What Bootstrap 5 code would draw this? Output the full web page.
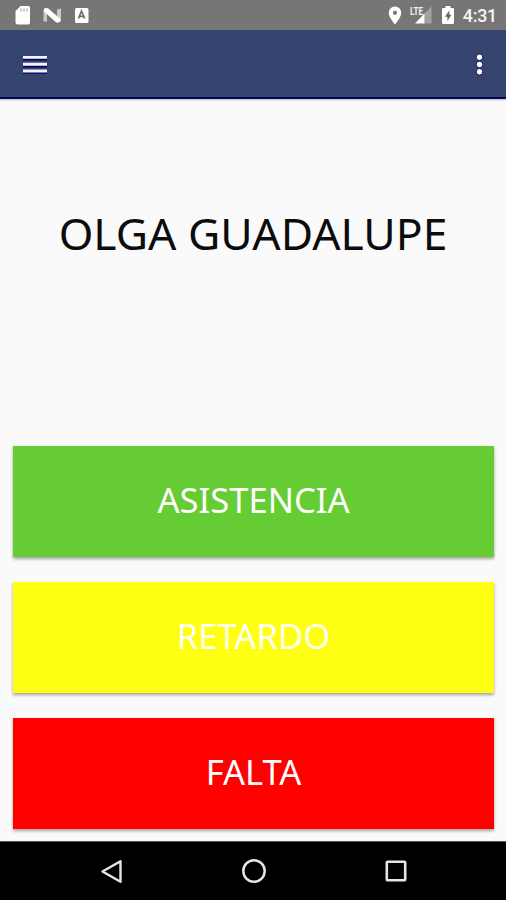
<!DOCTYPE html>
<html lang="es">
<head>
<meta charset="utf-8">
<meta name="viewport" content="width=device-width, initial-scale=1">
<title>Asistencia</title>
<link href="https://cdn.jsdelivr.net/npm/bootstrap@5.3.0/dist/css/bootstrap.min.css" rel="stylesheet">
<style>
html,body{height:100%}
body{background:#fafafa;font-family:"Noto Sans",sans-serif;overflow:hidden}
svg{display:block;flex:none}
.status-bar{height:30px;background:#767676;padding:0 9px 0 15px}
.clock{font:500 17.800px/30px Roboto,sans-serif;color:#f7f7f7;letter-spacing:-.2px;margin:2px 0 0 8px;height:30px}
.app-bar{height:69px;background:#35446f;border-bottom:2px solid #05055c;padding:0 22px 0 23px;box-shadow:0 1px 2px #b9b2cc}
.icon-btn{line-height:0}
.person{font-size:44.400px;line-height:60px;color:#0c0c0c;height:347px;padding-top:104px;font-weight:400}
.actions{gap:25px;padding:0 12px 0 13px}
.mark-btn{--bs-btn-border-width:0;--bs-btn-border-radius:0;--bs-btn-color:#fff;--bs-btn-hover-color:#fff;--bs-btn-font-size:34.600px;height:111px;line-height:47px;box-shadow:0 2px 3px rgba(0,0,0,.35);padding:0 0 5px}
.mark-present{background:#66cc33!important}
.mark-late{background:#ffff14!important}
.mark-absent{background:#ff0000!important}
.mark-late span{color:#fffff0}
.nav-keys{height:59px;background:#000;border-top:1px solid #555;padding:0 97px 0 99px}
</style>
<script src="https://cdn.jsdelivr.net/npm/bootstrap@5.3.0/dist/js/bootstrap.bundle.min.js" defer></script>
</head>
<body>
<div class="d-flex flex-column vh-100">
  <div class="status-bar d-flex align-items-center justify-content-between">
    <svg width="75" height="30" viewBox="15 0 75 30" aria-hidden="true">
      <path d="M20.500 6H28q2 0 2 2v14.500q0 2-2 2H17.500q-2 0-2-2V11z" fill="#fff"/>
      <path d="M21 8.500v3M24 8.500v3M27 8.500v3" stroke="#aaa" stroke-width="1.200"/>
      <path d="M43.500 9.500L47 12v10l-3.500-1zM61 8.500v12.500l-4-3V9.500z" fill="#c9c9c9"/>
      <path d="M44 8.500q2-1 4-.3L60.500 19v2.500q-2 1.800-4.500.8L44 11.500z" fill="#fff"/>
      <rect x="75" y="8" width="13.500" height="15" rx="1.500" fill="#fff"/>
      <path d="M78.500 18.500l3-7.500 3.200 7.500M79.700 16.300h4" fill="none" stroke="#6d6d6d" stroke-width="1.700"/>
    </svg>
    <div class="d-flex align-items-center">
      <svg width="68" height="30" viewBox="387 0 68 30" aria-hidden="true">
        <path fill-rule="evenodd" d="M395 6.500a6.300 6.300 0 0 0-6.300 6.300c0 4.500 6.300 11.700 6.300 11.700s6.300-7.200 6.300-11.700A6.300 6.300 0 0 0 395 6.500zm0 4.200a2.100 2.100 0 1 1 0 4.200 2.100 2.100 0 0 1 0-4.200z" fill="#fff"/>
        <path d="M431.500 6.500v17h-7V13.500z" fill="#a2a2a2"/>
        <path d="M424.500 13.500v10H415z" fill="#fff"/>
        <text x="410" y="14.500" font-family="Roboto, sans-serif" font-size="11" font-weight="700" fill="#f2f2f2" textLength="13" lengthAdjust="spacingAndGlyphs">LTE</text>
        <path d="M445.500 6h5v2h2.300q1.200 0 1.200 1.200v13.600q0 1.200-1.200 1.200h-9.600q-1.200 0-1.200-1.200V9.200q0-1.200 1.200-1.200h2.300z" fill="#fff"/>
        <path d="M449.300 10.500l-4.300 6.200h2.400v4.300l4-6.200h-2.100z" fill="#666"/>
      </svg>
      <span class="clock">4:31</span>
    </div>
  </div>
  <header class="app-bar d-flex align-items-center justify-content-between position-relative">
    <a href="#" class="icon-btn" aria-label="Menú">
      <svg width="24" height="20" viewBox="0 0 24 20"><path d="M0 4.600h24M0 11.400h24M0 17.800h24" stroke="#05055c" stroke-width="4"/><path d="M0 3.400h24M0 10.300h24M0 17h24" stroke="#f4f4ff" stroke-width="2.900"/></svg>
    </a>
    <a href="#" class="icon-btn" aria-label="Opciones">
      <svg width="9" height="24" viewBox="0 0 9 24" overflow="visible"><g fill="#fff" stroke="#15155f" stroke-width="1"><circle cx="4.500" cy="5.200" r="3.300"/><circle cx="4.500" cy="12.500" r="3.300"/><circle cx="4.500" cy="19.800" r="3.300"/></g></svg>
    </a>
  </header>
  <main class="flex-grow-1">
    <h1 class="person text-center text-nowrap mb-0">OLGA GUADALUPE</h1>
    <div class="actions d-grid">
      <button type="button" class="btn mark-btn mark-present"><span>ASISTENCIA</span></button>
      <button type="button" class="btn mark-btn mark-late"><span>RETARDO</span></button>
      <button type="button" class="btn mark-btn mark-absent"><span>FALTA</span></button>
    </div>
  </main>
  <nav class="nav-keys d-flex align-items-center justify-content-between" aria-label="Sistema">
    <svg width="25" height="26" viewBox="0 0 25 26"><path d="M21.500 3.200v20.600L3.500 13.500z" fill="none" stroke="#e6e6e6" stroke-width="2.400" stroke-linejoin="round"/></svg>
    <svg width="26" height="26" viewBox="0 0 26 26"><circle cx="13" cy="13" r="10.700" fill="none" stroke="#e6e6e6" stroke-width="2.500"/></svg>
    <svg width="26" height="26" viewBox="0 0 26 26"><rect x="3.800" y="3.800" width="18.400" height="18.400" rx=".8" fill="none" stroke="#e6e6e6" stroke-width="2.600"/></svg>
  </nav>
</div>
</body>
</html>
